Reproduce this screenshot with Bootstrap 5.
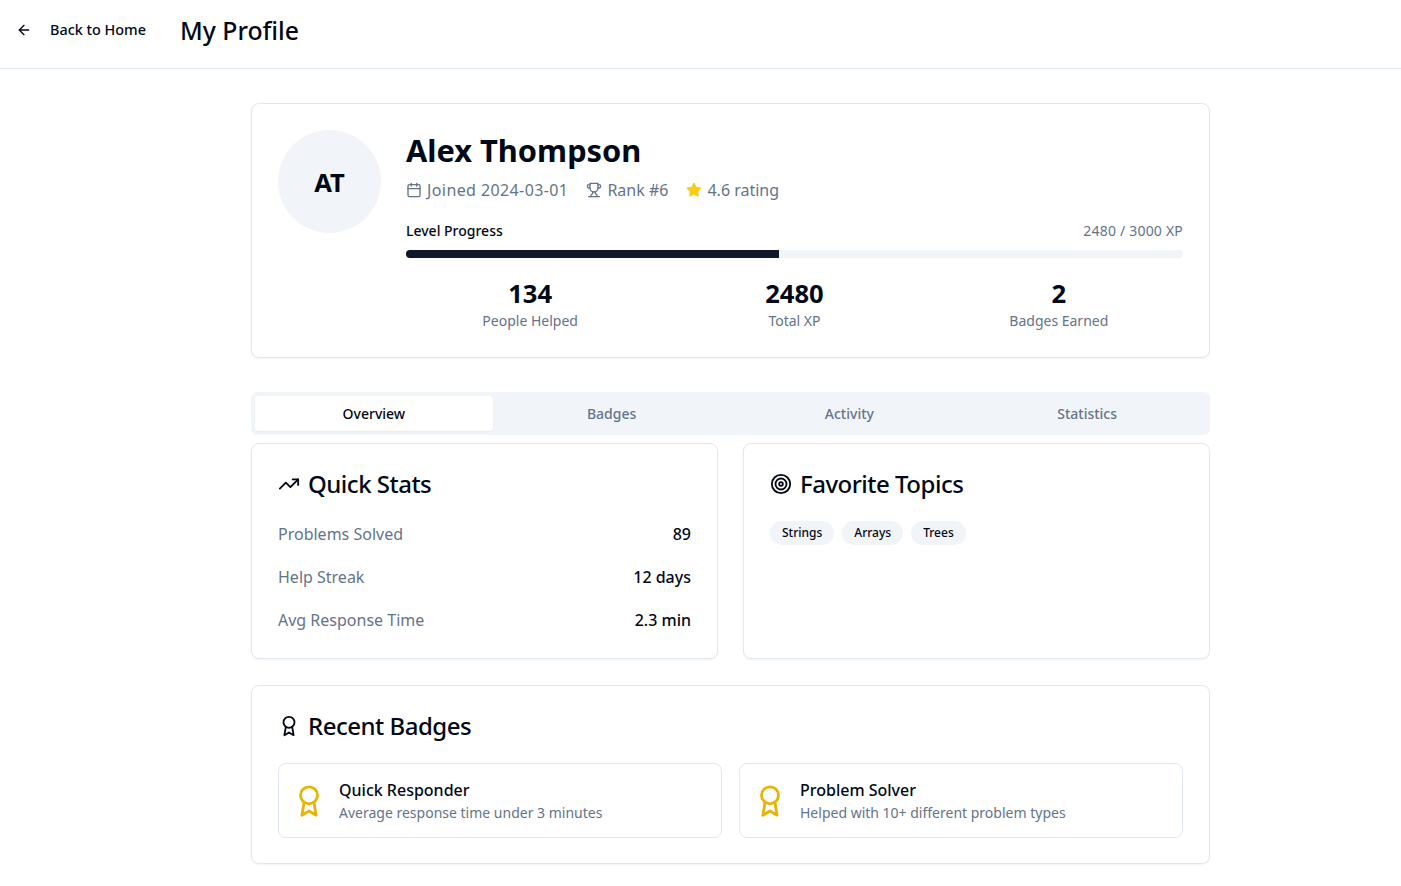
<!DOCTYPE html>
<html lang="en">
  <head>
    <meta charset="UTF-8" />
    <meta name="viewport" content="width=device-width, initial-scale=1.0" />
    <title>My Profile</title>
    <link href="https://cdn.jsdelivr.net/npm/bootstrap@5.3.0/dist/css/bootstrap.min.css" rel="stylesheet" />
    <style>
      body { font-family: "Noto Sans", "Open Sans", sans-serif; color: #020817; background: #fff; }
      svg.ico { fill: none; stroke: currentColor; stroke-width: 2; stroke-linecap: round; stroke-linejoin: round; flex-shrink: 0; }
      .top-bar { height: 69px; border-bottom: 1px solid #e2e8f0; padding: 0 0 10px 16px; }
      .back-link { color: #020817; font-size: 14.4px; font-weight: 500; text-decoration: none; gap: 18px; width: 164px; margin-top: 2px; }
      .page-title { font-size: 24.8px; font-weight: 500; margin: 4px 0 0; }
      .page-wrap { width: 959px; margin: 34px 0 0 251px; }
      .panel { border: 1px solid #e2e8f0; border-radius: 8px; box-shadow: 0 1px 2px rgba(0,0,0,.05); background: #fff; padding: 26px; }
      .panel-head { padding-top: 24px; }
      .avatar-circle { width: 103px; height: 103px; border-radius: 50%; background: #f1f5f9; font-size: 25.6px; font-weight: 700; padding-top: 3px; }
      .profile-row { gap: 25px; }
      .user-name { font-size: 30.8px; font-weight: 700; line-height: 36px; margin: 2px 0 0; }
      .meta-row { color: #64748b; font-size: 16px; gap: 18px; margin-top: 10px; line-height: 24px; }
      .meta-row > span { gap: 5px; }
      .joined-text { letter-spacing: .4px; }
      svg.star-ico { fill: #facc15; stroke: #facc15; }
      .level-head { margin-top: 18px; }
      .level-label { font-size: 14px; font-weight: 500; }
      .level-xp { font-size: 14px; color: #64748b; letter-spacing: .2px; }
      .level-track { height: 8px; background: #f1f5f9; border-radius: 999px; overflow: hidden; margin-top: 9px; }
      .level-fill { height: 100%; background: #0f172a; }
      .stat-grid { display: grid; grid-template-columns: repeat(3, 1fr); gap: 16px; margin-top: 18px; text-align: center; }
      .stat-num { font-size: 25.6px; font-weight: 700; line-height: 36px; }
      .stat-text { font-size: 14px; color: #64748b; line-height: 20px; margin-top: -1px; }
      .tab-strip { background: #f1f5f9; border-radius: 6px; padding: 4px; height: 43px; margin-top: 34px; }
      .tab-item { flex: 1 1 0; font-size: 14px; font-weight: 500; color: #64748b; border-radius: 4px; }
      .tab-item.on { background: #fff; color: #020817; box-shadow: 0 1px 2px rgba(0,0,0,.05); }
      .two-cols { display: grid; grid-template-columns: 1fr 1fr; gap: 25px; margin-top: 8px; }
      .two-cols .panel { height: 216px; }
      .panel-title { font-size: 24px; font-weight: 500; line-height: 32px; margin: 0; gap: 8px; letter-spacing: -.5px; }
      .stat-line { margin-top: 19px; line-height: 24px; }
      .stat-line.first { margin-top: 22px; }
      .stat-line .lbl { color: #64748b; }
      .stat-line .val { font-weight: 500; }
      .topic-row { margin-top: 21px; }
      .topic-pill { background: #f1f5f9; border-radius: 999px; font-size: 12px; font-weight: 500; padding: 2px 12px; line-height: 20px; }
      .recent-panel { margin: 26px 0 22px; padding-bottom: 25px; }
      .badge-grid { display: grid; grid-template-columns: 1fr 1fr; gap: 17px; margin-top: 21px; }
      .badge-box { border: 1px solid #e2e8f0; border-radius: 8px; padding: 12px 13px; gap: 13px; height: 75px; }
      .badge-ico { color: #eab308; }
      .badge-name { font-weight: 500; line-height: 24px; margin-top: -1px; }
      .badge-desc { font-size: 14px; color: #64748b; line-height: 20px; margin-top: 1px; }
    </style>
  </head>
  <body>
    <!-- Header -->
    <header class="top-bar d-flex align-items-center">
      <a class="back-link d-flex align-items-center" href="#">
        <svg class="ico" width="16" height="16" viewBox="0 0 24 24"><path d="m12 19-7-7 7-7" /><path d="M19 12H5" /></svg>
        Back to Home
      </a>
      <h1 class="page-title">My Profile</h1>
    </header>

    <div class="page-wrap">
      <!-- Profile card -->
      <section class="panel profile-row d-flex">
        <div class="avatar-circle d-flex align-items-center justify-content-center flex-shrink-0">AT</div>
        <div class="flex-grow-1">
          <h2 class="user-name">Alex Thompson</h2>
          <div class="meta-row d-flex">
            <span class="d-flex align-items-center">
              <svg class="ico" width="16" height="16" viewBox="0 0 24 24"><path d="M8 2v4" /><path d="M16 2v4" /><rect x="3" y="4" width="18" height="18" rx="2" /><path d="M3 10h18" /></svg>
              <span class="joined-text">Joined 2024-03-01</span>
            </span>
            <span class="d-flex align-items-center">
              <svg class="ico" width="16" height="16" viewBox="0 0 24 24"><path d="M6 9H4.5a2.5 2.5 0 0 1 0-5H6" /><path d="M18 9h1.5a2.5 2.5 0 0 0 0-5H18" /><path d="M4 22h16" /><path d="M10 14.66V17c0 .55-.47.98-.97 1.21C7.85 18.75 7 20.24 7 22" /><path d="M14 14.66V17c0 .55.47.98.97 1.21C16.15 18.75 17 20.24 17 22" /><path d="M18 2H6v7a6 6 0 0 0 12 0V2Z" /></svg>
              Rank #6
            </span>
            <span class="d-flex align-items-center">
              <svg class="ico star-ico" width="16" height="16" viewBox="0 0 24 24"><polygon points="12 2 15.09 8.26 22 9.27 17 14.14 18.18 21.02 12 17.77 5.82 21.02 7 14.14 2 9.27 8.91 8.26 12 2" /></svg>
              4.6 rating
            </span>
          </div>
          <div class="level-head d-flex justify-content-between">
            <span class="level-label">Level Progress</span>
            <span class="level-xp">2480 / 3000 XP</span>
          </div>
          <div class="level-track"><div class="level-fill" style="width: 48%"></div></div>
          <div class="stat-grid">
            <div><div class="stat-num">134</div><div class="stat-text">People Helped</div></div>
            <div><div class="stat-num">2480</div><div class="stat-text">Total XP</div></div>
            <div><div class="stat-num">2</div><div class="stat-text">Badges Earned</div></div>
          </div>
        </div>
      </section>

      <!-- Tabs -->
      <div class="tab-strip d-flex">
        <div class="tab-item on d-flex align-items-center justify-content-center">Overview</div>
        <div class="tab-item d-flex align-items-center justify-content-center">Badges</div>
        <div class="tab-item d-flex align-items-center justify-content-center">Activity</div>
        <div class="tab-item d-flex align-items-center justify-content-center">Statistics</div>
      </div>

      <div class="two-cols">
        <section class="panel panel-head">
          <h3 class="panel-title d-flex align-items-center">
            <svg class="ico" width="22" height="22" viewBox="0 0 24 24"><polyline points="22 7 13.5 15.5 8.5 10.5 2 17" /><polyline points="16 7 22 7 22 13" /></svg>
            Quick Stats
          </h3>
          <div class="stat-line first d-flex justify-content-between"><span class="lbl">Problems Solved</span><span class="val">89</span></div>
          <div class="stat-line d-flex justify-content-between"><span class="lbl">Help Streak</span><span class="val">12 days</span></div>
          <div class="stat-line d-flex justify-content-between"><span class="lbl">Avg Response Time</span><span class="val">2.3 min</span></div>
        </section>
        <section class="panel panel-head">
          <h3 class="panel-title d-flex align-items-center">
            <svg class="ico" width="22" height="22" viewBox="0 0 24 24"><circle cx="12" cy="12" r="10" /><circle cx="12" cy="12" r="6" /><circle cx="12" cy="12" r="2" /></svg>
            Favorite Topics
          </h3>
          <div class="topic-row d-flex gap-2">
            <span class="topic-pill">Strings</span>
            <span class="topic-pill">Arrays</span>
            <span class="topic-pill">Trees</span>
          </div>
        </section>
      </div>

      <!-- Recent badges -->
      <section class="panel panel-head recent-panel">
        <h3 class="panel-title d-flex align-items-center">
          <svg class="ico" width="22" height="22" viewBox="0 0 24 24"><circle cx="12" cy="8" r="6" /><path d="M15.477 12.89 17 22l-5-3-5 3 1.523-9.11" /></svg>
          Recent Badges
        </h3>
        <div class="badge-grid">
          <div class="badge-box d-flex align-items-center">
            <svg class="ico badge-ico" width="34" height="34" viewBox="0 0 24 24"><circle cx="12" cy="8" r="6" /><path d="M15.477 12.89 17 22l-5-3-5 3 1.523-9.11" /></svg>
            <div><div class="badge-name">Quick Responder</div><div class="badge-desc">Average response time under 3 minutes</div></div>
          </div>
          <div class="badge-box d-flex align-items-center">
            <svg class="ico badge-ico" width="34" height="34" viewBox="0 0 24 24"><circle cx="12" cy="8" r="6" /><path d="M15.477 12.89 17 22l-5-3-5 3 1.523-9.11" /></svg>
            <div><div class="badge-name">Problem Solver</div><div class="badge-desc">Helped with 10+ different problem types</div></div>
          </div>
        </div>
      </section>
    </div>

    <script src="https://cdn.jsdelivr.net/npm/bootstrap@5.3.0/dist/js/bootstrap.bundle.min.js"></script>
  </body>
</html>
